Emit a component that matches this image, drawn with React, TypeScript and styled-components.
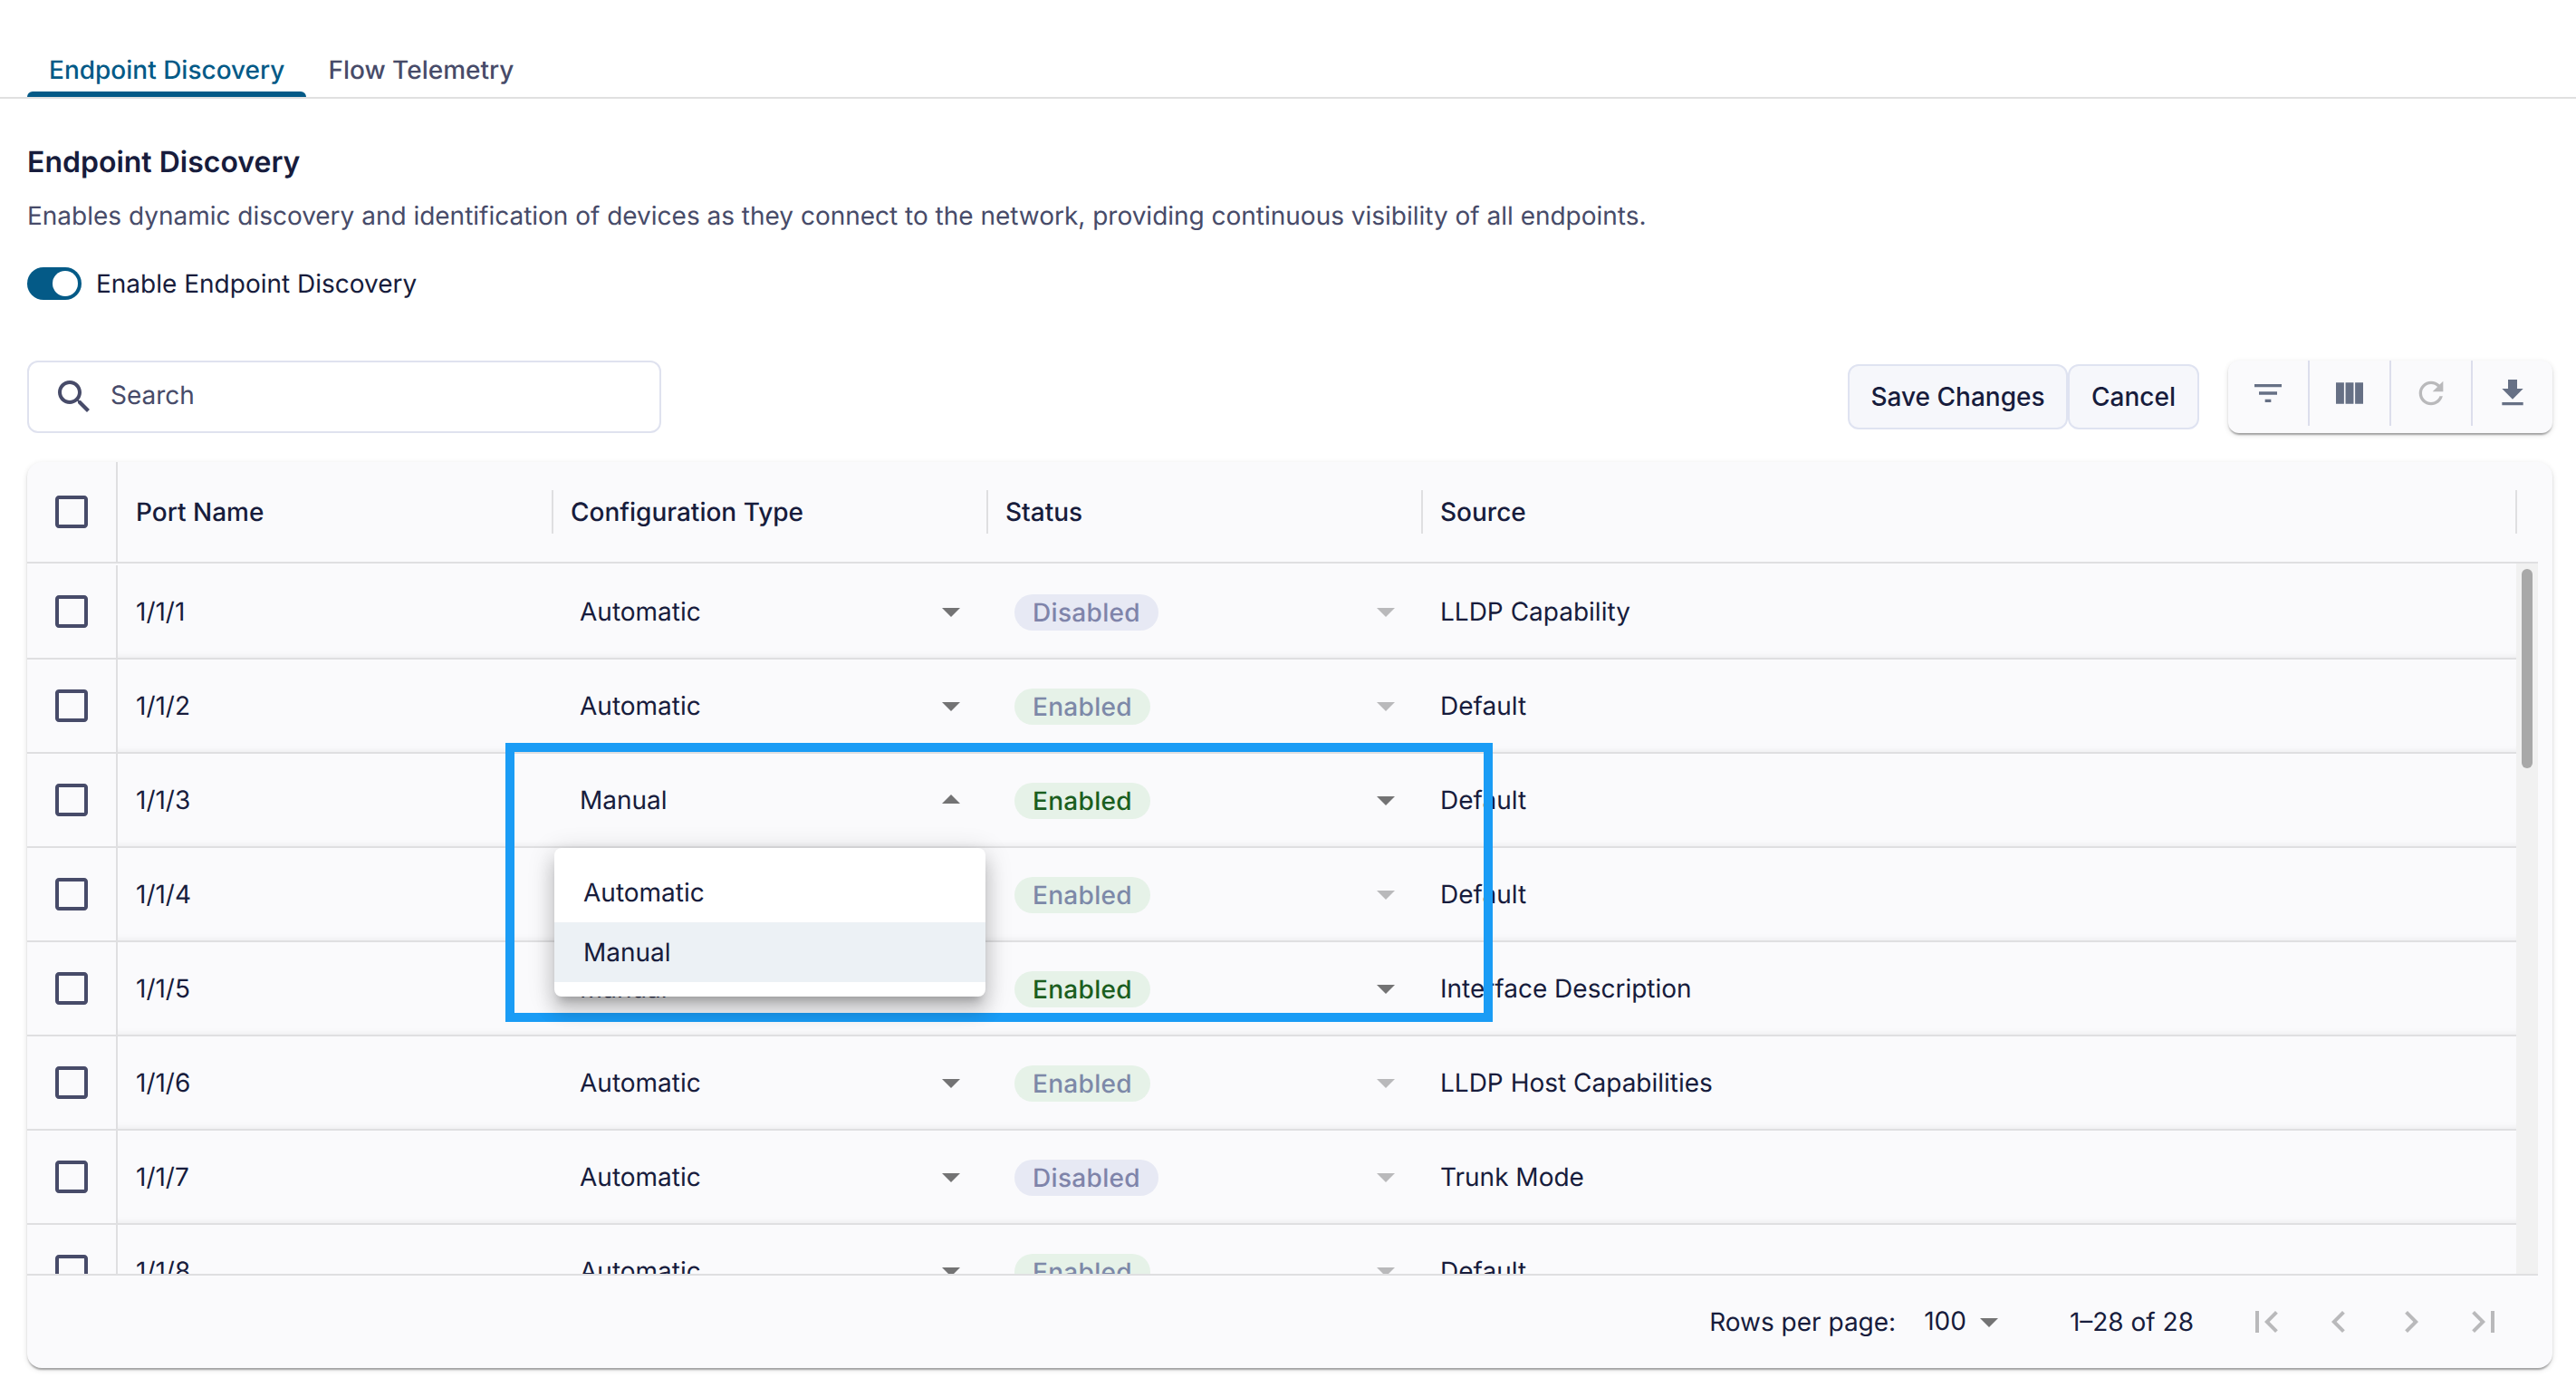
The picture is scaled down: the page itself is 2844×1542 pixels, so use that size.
import React from 'react';
import styled, { createGlobalStyle, css } from 'styled-components';

const color = {
  text: '#171c3c',
  muted: '#474b69',
  brand: '#045a87',
  line: '#dfdfe1',
  surface: '#fafafc',
  outline: '#dfe2ef',
  toolIcon: '#667085',
  arrow: '#737374',
  arrowDisabled: '#b9b9bb',
};

const elevation1 =
  '0 4px 2px -2px rgba(0,0,0,0.2), 0 2px 2px 0 rgba(0,0,0,0.14), 0 2px 6px 0 rgba(0,0,0,0.12)';
const elevation8 =
  '0 10px 10px -6px rgba(0,0,0,0.2), 0 16px 20px 2px rgba(0,0,0,0.14), 0 6px 28px 4px rgba(0,0,0,0.12)';

const GlobalStyle = createGlobalStyle`
  *, *::before, *::after { box-sizing: border-box; }
  body {
    margin: 0;
    background: #fff;
    color: ${color.text};
    font: 400 28px/40px Inter, "Liberation Sans", sans-serif;
    text-rendering: geometricPrecision;
  }
`;

const Page = styled.div`
  position: relative;
  width: 2844px;
  height: 1542px;
  overflow: hidden;
`;

const TabBar = styled.nav`
  display: flex;
  height: 109px;
  padding: 47px 0 0 30px;
  border-bottom: 2px solid #e0e0e0;
`;

const Tab = styled.div<{ $active?: boolean }>`
  position: relative;
  display: flex;
  align-items: center;
  height: 60px;
  padding: 0 24px;
  font-weight: 500;
  color: ${(p) => (p.$active ? color.brand : color.muted)};
  ${(p) =>
    p.$active &&
    css`
      &::after {
        content: '';
        position: absolute;
        left: 0;
        right: 0;
        bottom: 0;
        height: 6px;
        border-radius: 8px 8px 0 0;
        background: ${color.brand};
      }
    `}
`;

const Content = styled.main`
  display: flex;
  flex-direction: column;
  padding: 50px 26px 0 30px;
`;

const Title = styled.h1`
  margin: 0;
  font-size: 32px;
  line-height: 40px;
  font-weight: 600;
`;

const Description = styled.p`
  margin: 19px 0 0;
  color: ${color.muted};
  letter-spacing: -0.013px;
`;

const SwitchRow = styled.label`
  display: flex;
  align-items: center;
  gap: 16px;
  height: 36px;
  margin-top: 37px;
`;

const SwitchTrack = styled.span`
  display: flex;
  justify-content: flex-end;
  width: 60px;
  height: 36px;
  padding: 4px;
  border-radius: 18px;
  background: ${color.brand};
`;

const SwitchThumb = styled.span`
  width: 28px;
  height: 28px;
  border-radius: 50%;
  background: #fff;
`;

const Toolbar = styled.div`
  display: flex;
  align-items: center;
  height: 80px;
  margin-top: 67px;
`;

const SearchBox = styled.div`
  display: flex;
  align-items: center;
  gap: 16px;
  width: 700px;
  height: 80px;
  margin-right: auto;
  padding-left: 26px;
  border: 2px solid ${color.outline};
  border-radius: 12px;
  color: ${color.muted};
`;

const Placeholder = styled.span`
  padding-bottom: 4px;
`;

const Button = styled.button<{ $width: number }>`
  width: ${(p) => p.$width}px;
  height: 72px;
  padding: 0;
  border: 2px solid #dfe3f1;
  border-radius: 12px;
  background: #f6f7fb;
  color: ${color.text};
  font: inherit;
  font-weight: 500;
`;

const ToolGroup = styled.div`
  display: flex;
  align-items: flex-start;
  width: 358px;
  height: 80px;
  margin-left: 32px;
  border-radius: 12px;
  background: ${color.surface};
  box-shadow: ${elevation1};
`;

const ToolButton = styled.span<{ $disabled?: boolean }>`
  display: flex;
  align-items: center;
  justify-content: center;
  width: 90px;
  height: 72px;
  color: ${(p) => (p.$disabled ? color.arrowDisabled : color.toolIcon)};
  border-right: 2px solid #dcdeec;
  &:last-child {
    width: 88px;
    border-right: 0;
  }
`;

const Card = styled.section`
  display: flex;
  flex-direction: column;
  height: 1000px;
  margin-top: 32px;
  border-radius: 16px;
  background: ${color.surface};
  box-shadow: ${elevation1};
`;

const columns = '100px 480px 480px 480px 1208px';

const HeaderRow = styled.div`
  display: grid;
  grid-template-columns: ${columns};
  width: 2772px;
  height: 112px;
  border-bottom: 2px solid ${color.line};
  font-weight: 500;
`;

const HeaderCell = styled.div`
  display: flex;
  align-items: center;
  justify-content: space-between;
  padding-left: 20px;
`;

const Separator = styled.span`
  width: 2px;
  height: 48px;
  margin-right: -1px;
  background: ${color.line};
`;

const CheckCell = styled.div`
  display: flex;
  align-items: center;
  justify-content: center;
  border-right: 2px solid ${color.line};
  color: ${color.muted};
`;

const Body = styled.div`
  display: flex;
  width: 2772px;
  height: 786px;
  border-bottom: 2px solid ${color.line};
`;

const Rows = styled.div`
  width: 2748px;
  padding-top: 2px;
  overflow: hidden;
`;

const Row = styled.div`
  display: grid;
  grid-template-columns: 100px 1fr;
  height: 104px;
  border-bottom: 2px solid ${color.line};
`;

const RowCells = styled.div`
  display: grid;
  grid-template-columns: 480px 480px 480px 1208px;
  box-shadow: inset 0 -8px 6px -6px rgba(0, 0, 0, 0.05);
`;

const Cell = styled.div`
  display: flex;
  align-items: center;
  padding-left: 20px;
`;

const SelectCell = styled.div`
  position: relative;
  display: flex;
  align-items: center;
  justify-content: space-between;
  padding: 0 16px 0 30px;
`;

const Chip = styled.span<{ $on: boolean; $disabled: boolean }>`
  height: 40px;
  margin-top: 2px;
  padding: 0 20px;
  border-radius: 20px;
  line-height: 40px;
  font-weight: 500;
  letter-spacing: 0.32px;
  background: ${(p) => (p.$on ? '#e6f2e8' : '#e7e9f4')};
  color: ${(p) => (!p.$on ? '#7f84aa' : p.$disabled ? '#7d89a8' : '#1b5e20')};
`;

const ArrowSvg = styled.svg<{ $up?: boolean; $disabled?: boolean }>`
  width: 48px;
  height: 48px;
  flex: none;
  fill: ${(p) => (p.$disabled ? color.arrowDisabled : color.arrow)};
  transform: ${(p) => (p.$up ? 'rotate(180deg)' : 'none')};
`;

const Menu = styled.div`
  position: absolute;
  z-index: 2;
  left: 2px;
  top: 104px;
  width: 476px;
  height: 164px;
  padding: 16px 0;
  border-radius: 8px;
  background: #fff;
  box-shadow: ${elevation8};
`;

const MenuItem = styled.div<{ $selected?: boolean }>`
  display: flex;
  align-items: center;
  height: 66px;
  padding-left: 32px;
  background: ${(p) => (p.$selected ? '#ecf1f5' : 'transparent')};
`;

const ScrollTrack = styled.div`
  width: 24px;
  padding: 6px 6px 0;
  background: #f1f1f1;
`;

const ScrollThumb = styled.div`
  height: 220px;
  border-radius: 6px;
  background: #a8a8a8;
`;

const Footer = styled.div`
  display: flex;
  align-items: center;
  justify-content: flex-end;
  height: 102px;
  padding-right: 36px;
`;

const PageSize = styled.div`
  display: flex;
  align-items: center;
  gap: 1px;
  margin: 0 65px 0 31px;
`;

const PageSizeValue = styled.span`
  padding-bottom: 2px;
`;

const Pager = styled.div`
  display: flex;
  margin-left: 40px;
  color: ${color.arrowDisabled};
`;

const PagerButton = styled.span`
  display: flex;
  justify-content: center;
  width: 80px;
`;

const Highlight = styled.div`
  position: absolute;
  left: 558px;
  top: 820px;
  width: 1090px;
  height: 308px;
  border: 10px solid #1a9cf5;
`;

const Glyph = ({ d, size = 48 }: { d: string; size?: number }) => (
  <svg width={size} height={size} viewBox="0 0 24 24" fill="currentColor">
    <path d={d} />
  </svg>
);

const icon = {
  search:
    'M15.5 14h-.79l-.28-.27C15.41 12.59 16 11.11 16 9.5 16 5.91 13.09 3 9.5 3S3 5.91 3 9.5 5.91 16 9.5 16c1.61 0 3.09-.59 4.23-1.57l.27.28v.79l5 4.99L20.49 19l-4.99-5zm-6 0C7.01 14 5 11.99 5 9.5S7.01 5 9.5 5 14 7.01 14 9.5 11.99 14 9.5 14z',
  filter: 'M10 18h4v-2h-4v2zM3 6v2h18V6H3zm3 7h12v-2H6v2z',
  columns: 'M14.67 5v14H9.33V5h5.34zm1 14H21V5h-5.33v14zm-7.34 0V5H3v14h5.33z',
  refresh:
    'M17.65 6.35C16.2 4.9 14.21 4 12 4c-4.42 0-7.99 3.58-7.99 8s3.57 8 7.99 8c3.73 0 6.84-2.55 7.73-6h-2.08c-.82 2.33-3.04 4-5.65 4-3.31 0-6-2.69-6-6s2.69-6 6-6c1.66 0 3.14.69 4.22 1.78L13 11h7V4l-2.35 2.35z',
  download: 'M5 20h14v-2H5v2zM19 9h-4V3H9v6H5l7 7 7-7z',
  checkbox:
    'M19 5v14H5V5h14m0-2H5c-1.1 0-2 .9-2 2v14c0 1.1.9 2 2 2h14c1.1 0 2-.9 2-2V5c0-1.1-.9-2-2-2z',
  first: 'M18.41 16.59L13.82 12l4.59-4.59L17 6l-6 6 6 6zM6 6h2v12H6z',
  previous: 'M15.41 16.59L10.83 12l4.58-4.59L14 6l-6 6 6 6 1.41-1.41z',
  next: 'M8.59 16.59L13.17 12 8.59 7.41 10 6l6 6-6 6-1.41-1.41z',
  last: 'M5.59 7.41L10.18 12l-4.59 4.59L7 18l6-6-6-6zM16 6h2v12h-2z',
};

const Arrow = ({ up, disabled }: { up?: boolean; disabled?: boolean }) => (
  <ArrowSvg viewBox="0 0 24 24" $up={up} $disabled={disabled}>
    <path d="M7 10l5 5 5-5z" />
  </ArrowSvg>
);

interface Port {
  name: string;
  type: 'Automatic' | 'Manual';
  status: 'Enabled' | 'Disabled';
  source: string;
  open?: boolean;
}

const ports: Port[] = [
  { name: '1/1/1', type: 'Automatic', status: 'Disabled', source: 'LLDP Capability' },
  { name: '1/1/2', type: 'Automatic', status: 'Enabled', source: 'Default' },
  { name: '1/1/3', type: 'Manual', status: 'Enabled', source: 'Default', open: true },
  { name: '1/1/4', type: 'Automatic', status: 'Enabled', source: 'Default' },
  { name: '1/1/5', type: 'Manual', status: 'Enabled', source: 'Interface Description' },
  { name: '1/1/6', type: 'Automatic', status: 'Enabled', source: 'LLDP Host Capabilities' },
  { name: '1/1/7', type: 'Automatic', status: 'Disabled', source: 'Trunk Mode' },
  { name: '1/1/8', type: 'Automatic', status: 'Enabled', source: 'Default' },
];

const PortRow = ({ port }: { port: Port }) => {
  const locked = port.type === 'Automatic';
  return (
    <Row>
      <CheckCell>
        <Glyph d={icon.checkbox} />
      </CheckCell>
      <RowCells>
        <Cell>{port.name}</Cell>
        <SelectCell>
          {port.type}
          <Arrow up={port.open} />
          {port.open && (
            <Menu>
              <MenuItem>Automatic</MenuItem>
              <MenuItem $selected>Manual</MenuItem>
            </Menu>
          )}
        </SelectCell>
        <SelectCell>
          <Chip $on={port.status === 'Enabled'} $disabled={locked}>
            {port.status}
          </Chip>
          <Arrow disabled={locked} />
        </SelectCell>
        <Cell>{port.source}</Cell>
      </RowCells>
    </Row>
  );
};

export default function App() {
  return (
    <Page>
      <GlobalStyle />
      <TabBar>
        <Tab $active>Endpoint Discovery</Tab>
        <Tab>Flow Telemetry</Tab>
      </TabBar>
      <Content>
        <Title>Endpoint Discovery</Title>
        <Description>
          Enables dynamic discovery and identification of devices as they connect to the network,
          providing continuous visibility of all endpoints.
        </Description>
        <SwitchRow>
          <SwitchTrack>
            <SwitchThumb />
          </SwitchTrack>
          Enable Endpoint Discovery
        </SwitchRow>
        <Toolbar>
          <SearchBox>
            <Glyph d={icon.search} />
            <Placeholder>Search</Placeholder>
          </SearchBox>
          <Button $width={243}>Save Changes</Button>
          <Button $width={145}>Cancel</Button>
          <ToolGroup>
            <ToolButton>
              <Glyph d={icon.filter} size={40} />
            </ToolButton>
            <ToolButton>
              <Glyph d={icon.columns} size={40} />
            </ToolButton>
            <ToolButton $disabled>
              <Glyph d={icon.refresh} size={40} />
            </ToolButton>
            <ToolButton>
              <Glyph d={icon.download} size={40} />
            </ToolButton>
          </ToolGroup>
        </Toolbar>
        <Card>
          <HeaderRow>
            <CheckCell>
              <Glyph d={icon.checkbox} />
            </CheckCell>
            {['Port Name', 'Configuration Type', 'Status', 'Source'].map((label) => (
              <HeaderCell key={label}>
                {label}
                <Separator />
              </HeaderCell>
            ))}
          </HeaderRow>
          <Body>
            <Rows>
              {ports.map((port) => (
                <PortRow key={port.name} port={port} />
              ))}
            </Rows>
            <ScrollTrack>
              <ScrollThumb />
            </ScrollTrack>
          </Body>
          <Footer>
            Rows per page:
            <PageSize>
              <PageSizeValue>100</PageSizeValue>
              <Arrow />
            </PageSize>
            1–28 of 28
            <Pager>
              {[icon.first, icon.previous, icon.next, icon.last].map((d) => (
                <PagerButton key={d}>
                  <Glyph d={d} />
                </PagerButton>
              ))}
            </Pager>
          </Footer>
        </Card>
      </Content>
      <Highlight />
    </Page>
  );
}
